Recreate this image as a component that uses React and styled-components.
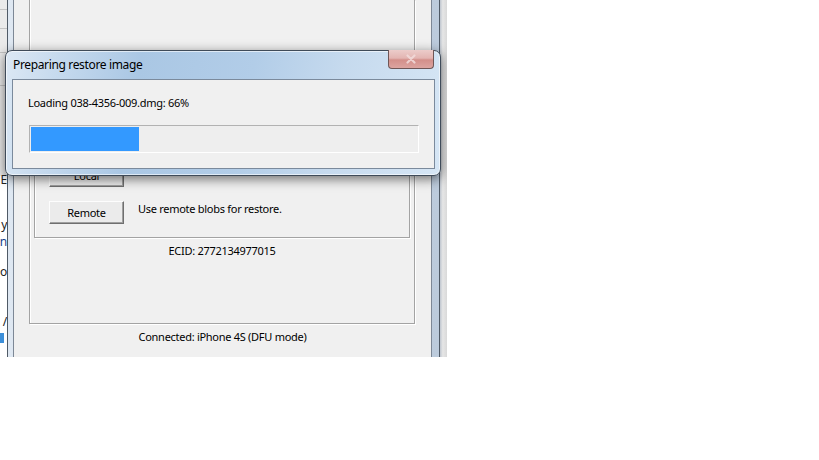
import styled, { createGlobalStyle } from "styled-components";

const GlobalStyle = createGlobalStyle`
  body {
    margin: 0;
    background: #ffffff;
    font-family: "Noto Sans", "Liberation Sans", sans-serif;
  }
`;

// the cropped desktop
const Stage = styled.div`
  position: relative;
  display: flex;
  width: 447px;
  height: 357px;
  overflow: hidden;
  font-size: 11px;
  letter-spacing: -0.28px;
  color: #000;
`;

// window peeking in on the left
const LeftPeek = styled.div`
  display: flex;
  flex-direction: column;
  width: 7px;
  overflow: hidden;
  background: #ffffff;
`;

const PeekGrid = styled.div`
  display: flex;
  flex-direction: column;
  height: 176px;
  background: #eaeaea;
  flex-shrink: 0;
`;

const PeekCell = styled.div`
  height: ${(p) => p.$h}px;
  border-bottom: 1px solid #c4c4c4;
  box-sizing: border-box;
`;

const PeekLine = styled.div`
  display: flex;
  justify-content: flex-end;
  width: 7px;
  margin-top: ${(p) => p.$gap}px;
  line-height: 14px;
  font-size: 12px;
  white-space: nowrap;
  color: ${(p) => p.$color || "#222"};
`;

const PeekBlock = styled.div`
  margin-top: 4px;
  width: 4px;
  height: 10px;
  background: #3d8fd9;
`;

const RightPeek = styled.div`
  width: 7px;
  background: linear-gradient(to right, #bfc6cf, #e6e6e6 40%, #d9d9d9);
  border-left: 1px solid #4f5a66;
`;

// main background window
const AppWindow = styled.div`
  display: flex;
  width: 433px;
  box-sizing: border-box;
  border-left: 1px solid #4f5a66;
  padding: 0 7px 0 5px;
  background: linear-gradient(to right, #dfe8f2, #c9d7e7 50%, #bccbdc);
`;

const Client = styled.div`
  flex: 1;
  display: flex;
  flex-direction: column;
  align-items: stretch;
  background: #f0f0f0;
  border-left: 1px solid #7d8896;
  border-right: 1px solid #7d8896;
`;

const OuterGroup = styled.div`
  display: flex;
  flex-direction: column;
  height: 324px;
  box-sizing: border-box;
  margin: 0 16px 0 15px;
  padding: 0 4px;
  border: 1px solid #a3a3a3;
  border-top: none;
  box-shadow: inset 1px 0 0 #fff, 1px 1px 0 #fff;
`;

const InnerGroup = styled.div`
  display: flex;
  flex-direction: column;
  justify-content: flex-end;
  gap: 14px;
  height: 128px;
  box-sizing: border-box;
  margin-top: 110px;
  padding: 0 14px 13px;
  border: 1px solid #a3a3a3;
  box-shadow: inset 1px 1px 0 #fff, 1px 1px 0 #fff;
`;

const OptionRow = styled.div`
  display: flex;
  align-items: flex-start;
  gap: 14px;
`;

const Button = styled.button`
  width: 75px;
  height: 23px;
  padding: 0;
  font: inherit;
  letter-spacing: inherit;
  color: #000;
  background: #ebebeb;
  border: 1px solid;
  border-color: #fdfdfd #6f6f6f #6f6f6f #fdfdfd;
  box-shadow: inset -1px -1px 0 #a0a0a0;
`;

const OptionText = styled.div`
  line-height: 16px;
`;

const CenterText = styled.div`
  margin-top: ${(p) => p.$gap}px;
  line-height: 16px;
  text-align: center;
`;

// modal progress dialog floating above
const Dialog = styled.div`
  position: absolute;
  left: 5px;
  top: 50px;
  width: 436px;
  height: 126px;
  box-sizing: border-box;
  display: flex;
  flex-direction: column;
  padding: 0 5px 6px 6px;
  border: 1px solid #3f4b59;
  border-radius: 7px;
  background: linear-gradient(100deg, #dce8f4 0%, #c6daee 12%, #aac7e4 30%, #b2cde8 55%, #c6daee 75%, #d6e6f5 100%);
  box-shadow: 0 3px 12px rgba(0, 0, 0, 0.55), inset 0 0 0 1px rgba(255, 255, 255, 0.6);
`;

const TitleBar = styled.div`
  display: flex;
  justify-content: space-between;
  height: 28px;
`;

const Title = styled.div`
  align-self: center;
  padding: 0 0 1px 1px;
  font-size: 12px;
  letter-spacing: -0.35px;
  color: #000;
`;

const CloseButton = styled.div`
  display: flex;
  align-items: center;
  justify-content: center;
  width: 46px;
  height: 19px;
  box-sizing: border-box;
  margin: -1px 1px 0 0;
  border: 1px solid #6f5656;
  border-top: none;
  border-radius: 0 0 4px 4px;
  background: linear-gradient(#ecccca 0%, #e3b5b2 45%, #d38f8a 55%, #dca4a0 100%);
`;

const DialogClient = styled.div`
  flex: 1;
  display: flex;
  flex-direction: column;
  padding: 15px 0 0 15px;
  background: #f0f0f0;
  border: 1px solid #7b8a9c;
`;

const Status = styled.div`
  line-height: 16px;
`;

const Progress = styled.div`
  width: 390px;
  height: 28px;
  box-sizing: border-box;
  margin: 14px 0 0 1px;
  padding: 1px;
  border: 1px solid;
  border-color: #b2b2b2 #ffffff #ffffff #b2b2b2;
  background: #eeeeee;
`;

const ProgressFill = styled.div`
  width: ${(p) => p.$width}px;
  height: 100%;
  background: #3399ff;
`;

function CloseGlyph() {
  return (
    <svg width="12" height="10" viewBox="0 0 12 10">
      <path d="M2.5 1.5 L9.5 8.5 M9.5 1.5 L2.5 8.5" stroke="#f2dcdb" strokeWidth="2.2" strokeLinecap="round" opacity="0.85" />
    </svg>
  );
}

export default function App() {
  return (
    <Stage>
      <GlobalStyle />
      <LeftPeek>
        <PeekGrid>
          <PeekCell $h={10} />
          <PeekCell $h={19} />
          <PeekCell $h={24} />
          <PeekCell $h={33} />
        </PeekGrid>
        <PeekLine $gap={-3}>E</PeekLine>
        <PeekLine $gap={31}>y</PeekLine>
        <PeekLine $gap={3} $color="#1a3f8a">n</PeekLine>
        <PeekLine $gap={16}>o</PeekLine>
        <PeekLine $gap={36}>/</PeekLine>
        <PeekBlock />
      </LeftPeek>
      <AppWindow>
        <Client>
          <OuterGroup>
            <InnerGroup>
              <OptionRow>
                <Button>Local</Button>
                <OptionText>Use local blobs for restore.</OptionText>
              </OptionRow>
              <OptionRow>
                <Button>Remote</Button>
                <OptionText>Use remote blobs for restore.</OptionText>
              </OptionRow>
            </InnerGroup>
            <CenterText $gap={5}>ECID: 2772134977015</CenterText>
          </OuterGroup>
          <CenterText $gap={5}>Connected: iPhone 4S (DFU mode)</CenterText>
        </Client>
      </AppWindow>
      <RightPeek />
      <Dialog>
        <TitleBar>
          <Title>Preparing restore image</Title>
          <CloseButton>
            <CloseGlyph />
          </CloseButton>
        </TitleBar>
        <DialogClient>
          <Status>Loading 038-4356-009.dmg: 66%</Status>
          <Progress>
            <ProgressFill $width={108} />
          </Progress>
        </DialogClient>
      </Dialog>
    </Stage>
  );
}
